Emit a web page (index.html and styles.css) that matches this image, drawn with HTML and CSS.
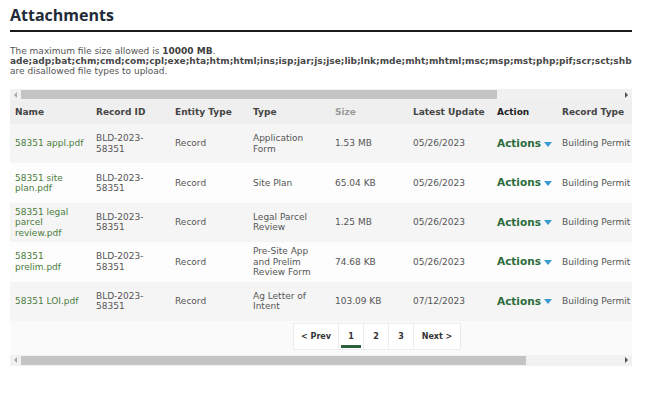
FILE: index.html
```html
<!DOCTYPE html>
<html>
<head>
<meta charset="utf-8">
<link rel="stylesheet" href="styles.css">
</head>
<body>
<div class="page">
  <h1 class="title">Attachments</h1>
  <div class="info">
    <div class="line">The maximum file size allowed is <b>10000 MB</b>.</div>
    <div class="line ext">ade;adp;bat;chm;cmd;com;cpl;exe;hta;htm;html;ins;isp;jar;js;jse;lib;lnk;mde;mht;mhtml;msc;msp;mst;php;pif;scr;sct;shb;shs;tmp;url;vb;vbe;vbs;vsmacros;vss;vst;vsw;ws;wsc;wsf;wsh</div>
    <div class="line">are disallowed file types to upload.</div>
  </div>
  <div class="grid">
    <div class="scrollbar">
      <span class="arrow left"></span>
      <div class="track"><div class="thumb thumb-top"></div></div>
      <span class="arrow right"></span>
    </div>
    <div class="viewport">
      <div class="inner">
        <table class="tbl">
          <colgroup>
            <col class="c1"><col class="c2"><col class="c3"><col class="c4"><col class="c5"><col class="c6"><col class="c7"><col class="c8">
          </colgroup>
          <thead>
            <tr>
              <th>Name</th><th>Record ID</th><th>Entity Type</th><th>Type</th><th class="muted">Size</th><th>Latest Update</th><th class="strong">Action</th><th>Record Type</th>
            </tr>
          </thead>
          <tbody>
            <tr class="odd">
              <td class="link">58351 appl.pdf</td><td>BLD-2023-<br>58351</td><td>Record</td><td>Application<br>Form</td><td>1.53 MB</td><td>05/26/2023</td><td><span class="actions">Actions<span class="caret"></span></span></td><td>Building Permit</td>
            </tr>
            <tr class="even">
              <td class="link">58351 site<br>plan.pdf</td><td>BLD-2023-<br>58351</td><td>Record</td><td>Site Plan</td><td>65.04 KB</td><td>05/26/2023</td><td><span class="actions">Actions<span class="caret"></span></span></td><td>Building Permit</td>
            </tr>
            <tr class="odd">
              <td class="link">58351 legal<br>parcel<br>review.pdf</td><td>BLD-2023-<br>58351</td><td>Record</td><td>Legal Parcel<br>Review</td><td>1.25 MB</td><td>05/26/2023</td><td><span class="actions">Actions<span class="caret"></span></span></td><td>Building Permit</td>
            </tr>
            <tr class="even">
              <td class="link">58351<br>prelim.pdf</td><td>BLD-2023-<br>58351</td><td>Record</td><td>Pre-Site App<br>and Prelim<br>Review Form</td><td>74.68 KB</td><td>05/26/2023</td><td><span class="actions">Actions<span class="caret"></span></span></td><td>Building Permit</td>
            </tr>
            <tr class="odd">
              <td class="link">58351 LOI.pdf</td><td>BLD-2023-<br>58351</td><td>Record</td><td>Ag Letter of<br>Intent</td><td>103.09 KB</td><td>07/12/2023</td><td><span class="actions">Actions<span class="caret"></span></span></td><td>Building Permit</td>
            </tr>
          </tbody>
        </table>
        <div class="pager">
          <span class="pg wide">&lt; Prev</span>
          <span class="pg num active">1</span>
          <span class="pg num">2</span>
          <span class="pg num">3</span>
          <span class="pg wide next">Next &gt;</span>
        </div>
      </div>
    </div>
    <div class="scrollbar bottom">
      <span class="arrow left"></span>
      <div class="track"><div class="thumb thumb-bottom"></div></div>
      <span class="arrow right"></span>
    </div>
  </div>
</div>
</body>
</html>
```
FILE: styles.css
```css
* { box-sizing: border-box; }
html, body { margin: 0; padding: 0; background: #fff; }
body { font-family: "DejaVu Sans", Verdana, sans-serif; color: #555; }

.page { width: 632px; padding-left: 10px; }

.title {
  margin: 4px 0 0 0;
  padding: 0 0 4px 0;
  font-family: "Open Sans", "DejaVu Sans", sans-serif;
  font-weight: 700;
  font-size: 16px;
  line-height: 22px;
  color: #1f2b38;
  border-bottom: 2px solid #1a1a1a;
}

.info {
  margin-top: 14px;
  font-size: 9px;
  line-height: 10px;
  color: #555;
  overflow: hidden;
  white-space: nowrap;
}
.info b { color: #404040; }
.ext { font-weight: 700; color: #484848; }

.grid { margin-top: 13px; }

.scrollbar {
  display: flex;
  height: 11px;
  background: #f1f1f1;
  align-items: center;
}
.scrollbar .track { flex: 1; height: 11px; display: flex; align-items: center; }
.thumb { height: 9px; background: #c4c4c4; }
.thumb-top { width: 476px; }
.thumb-bottom { width: 505px; }
.arrow { width: 11px; height: 11px; display: flex; align-items: center; justify-content: center; }
.arrow::before { content: ""; width: 0; height: 0; border-top: 3px solid transparent; border-bottom: 3px solid transparent; }
.arrow.left::before { border-right: 3px solid #a8a8a8; }
.arrow.right::before { border-left: 3px solid #505050; }

.viewport { overflow: hidden; width: 622px; }
.inner { width: 735px; }

.tbl {
  border-collapse: collapse;
  table-layout: fixed;
  width: 735px;
  font-size: 9px;
  line-height: 10.5px;
}
.c1 { width: 81px; } .c2 { width: 79px; } .c3 { width: 78px; } .c4 { width: 82px; }
.c5 { width: 78px; } .c6 { width: 84px; } .c7 { width: 65px; } .c8 { width: 188px; }

.tbl th {
  height: 24px;
  padding: 0 5px;
  text-align: left;
  font-weight: 700;
  color: #444;
  background: #efefef;
  vertical-align: middle;
  white-space: nowrap;
}
.tbl th.muted { color: #9a9a9a; }
.tbl th.strong { color: #222; }

.tbl td {
  height: 39.4px;
  padding: 0 5px;
  vertical-align: middle;
  color: #555;
  white-space: nowrap;
}
.tbl tr.odd td { background: #f5f5f5; }
.tbl tr.even td { background: #fdfdfd; }
.tbl td.link { color: #4b7c3c; }

.actions {
  display: inline-flex;
  align-items: center;
  font-size: 10.5px;
  font-weight: 700;
  color: #2b6b3c;
}
.caret {
  margin-left: 3px;
  margin-top: 2px;
  width: 0; height: 0;
  border-left: 4px solid transparent;
  border-right: 4px solid transparent;
  border-top: 5px solid #3a9bd1;
}

.pager {
  display: flex;
  justify-content: center;
  padding: 2px 0 5px 0;
  background: #fafafa;
}
.pg {
  height: 27px;
  display: flex;
  align-items: center;
  justify-content: center;
  font-size: 8px;
  font-weight: 700;
  color: #333;
  background: #fff;
  border: 1px solid #ececec;
  margin-left: -1px;
  position: relative;
}
.pg.wide { width: 46px; }
.pg.next { width: 48px; }
.pg.num { width: 26px; }
.pg.active::after {
  content: "";
  position: absolute;
  left: 2px; right: 2px; bottom: 1px;
  height: 3px;
  background: #2d5e3c;
}
```
